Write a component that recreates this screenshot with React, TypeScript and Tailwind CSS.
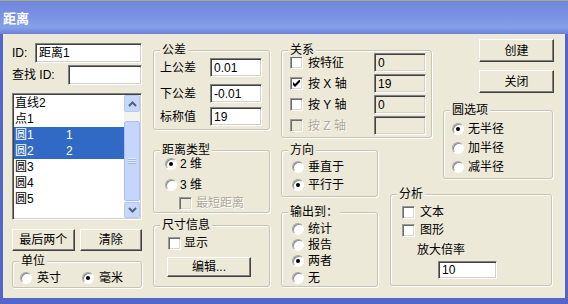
import React from "react";

const sunken =
  "border border-[#808080] border-r-white border-b-white shadow-[inset_1px_1px_0_#404040,inset_-1px_-1px_0_#D4D0C8]";
const sunkenSoft =
  "border border-[#9A9A9A] border-r-white border-b-white shadow-[inset_1px_1px_0_#6A6A6A,inset_-1px_-1px_0_#DCD9CC]";
const sunkenRound =
  "border border-[#A7A7A7] border-r-white border-b-white shadow-[inset_1px_1px_0_#8A8A8A]";

function Group({ title, className = "", children }: { title: string; className?: string; children?: React.ReactNode }) {
  return (
    <div className={`relative pt-[7px] ${className}`}>
      <div className="h-full rounded-[3px] border border-[#C7C4B4] shadow-[1px_1px_0_#fff,inset_1px_1px_0_#fff]">
        {children}
      </div>
      <span className="absolute left-[7px] top-0 bg-[#ECE9D8] px-[2px] leading-[14px]">{title}</span>
    </div>
  );
}

function Field({ children, className = "", disabled = false }: { children?: React.ReactNode; className?: string; disabled?: boolean }) {
  return (
    <div className={`flex items-center pl-[3px] leading-none ${sunken} ${disabled ? "bg-[#ECE9D8]" : "bg-white"} ${className}`}>
      {children}
    </div>
  );
}

function Btn({ children, className = "" }: { children: React.ReactNode; className?: string }) {
  return (
    <button className={`flex items-center justify-center bg-[#ECE9D8] border border-white border-r-[#404040] border-b-[#404040] shadow-[inset_-1px_-1px_0_#808080] ${className}`}>
      {children}
    </button>
  );
}

function Radio({ checked = false }: { checked?: boolean }) {
  return (
    <span className={`flex w-[12px] h-[12px] shrink-0 items-center justify-center rounded-full bg-white ${sunkenRound}`}>
      {checked && <span className="w-[4px] h-[4px] rounded-full bg-black" />}
    </span>
  );
}

function Check({ checked = false, disabled = false }: { checked?: boolean; disabled?: boolean }) {
  return (
    <span className={`flex w-[13px] h-[13px] shrink-0 items-center justify-center ${sunkenSoft} ${disabled ? "bg-[#ECE9D8]" : "bg-white"}`}>
      {checked && (
        <svg width="7" height="7" viewBox="0 0 7 7">
          <path d="M0 2 L2 4 L7 -1 L7 2 L2 7 L0 5 Z" fill="#000" />
        </svg>
      )}
    </span>
  );
}

const dim = "text-[#ACA899] [text-shadow:1px_1px_0_#fff]";

function Chevron({ up }: { up?: boolean }) {
  return (
    <svg width="9" height="6" viewBox="0 0 9 6">
      <path d={up ? "M1 5 L4.5 1.5 L8 5" : "M1 1 L4.5 4.5 L8 1"} fill="none" stroke="#4D6185" strokeWidth="2" />
    </svg>
  );
}

function ListBox() {
  const rows: [string, string, boolean][] = [
    ["直线2", "", false],
    ["点1", "", false],
    ["圆1", "1", true],
    ["圆2", "2", true],
    ["圆3", "", false],
    ["圆4", "", false],
    ["圆5", "", false],
  ];
  return (
    <div className={`mt-[8px] h-[127px] flex p-px bg-white ${sunken}`}>
      <div className="flex-1 flex flex-col">
        {rows.map(([a, b, sel]) => (
          <div key={a} className={`h-[16px] flex items-center pl-[1px] ${sel ? "bg-[#316AC5] text-white" : ""}`}>
            <span className="w-[51px]">{a}</span>
            <span>{b}</span>
          </div>
        ))}
      </div>
      <div className="w-[16px] flex flex-col bg-[#F4F3EE]">
        <div className="h-[17px] flex items-center justify-center rounded-[2px] border border-[#B5C7F3] bg-[#C7D6FB]">
          <Chevron up />
        </div>
        <div className="h-[9px]" />
        <div className="h-[80px] flex items-center justify-center rounded-[2px] border border-[#AABEF0] bg-[#C5D5FC]">
          <svg width="8" height="8" viewBox="0 0 8 8">
            <path d="M0 1.5 H8 M0 3.5 H8 M0 5.5 H8" stroke="#E4ECFE" strokeWidth="1" />
            <path d="M0 2.5 H8 M0 4.5 H8 M0 6.5 H8" stroke="#9FB5EE" strokeWidth="1" />
          </svg>
        </div>
        <div className="flex-1" />
        <div className="h-[16px] flex items-center justify-center rounded-[2px] border border-[#B5C7F3] bg-[#C7D6FB]">
          <Chevron />
        </div>
      </div>
    </div>
  );
}

export default function App() {
  return (
    <div className="w-[568px] h-[304px] flex flex-col overflow-hidden bg-[#5366CC] font-['Liberation_Sans','Noto_Sans_CJK_SC',sans-serif] text-[12px] leading-[16px] text-black">
      <div className="h-[34px] shrink-0 flex items-center pl-[3px] pt-[2px] border-t border-[#A8A890] bg-[linear-gradient(180deg,#7086DB_0%,#7A92E2_45%,#86A0E8_80%,#6C82D6_100%)]">
        <span className="text-[13px] font-bold text-white leading-none">距离</span>
      </div>

      <div className="flex-1 mx-[3px] mb-[6px] flex pl-[9px] bg-[#ECE9D8]">
        {/* left column */}
        <div className="w-[130px] flex flex-col">
          <div className="mt-[9px] h-[20px] flex items-center">
            <span className="w-[23px]">ID:</span>
            <Field className="flex-1 h-full">距离1</Field>
          </div>
          <div className="mt-[2px] h-[20px] flex items-center">
            <span className="w-[56px]">查找 ID:</span>
            <Field className="flex-1 h-full" />
          </div>
          <ListBox />
          <div className="mt-[9px] h-[22px] flex gap-[5px]">
            <Btn className="flex-1">最后两个</Btn>
            <Btn className="flex-1">清除</Btn>
          </div>
          <Group title="单位" className="mt-[3px] h-[34px]">
            <div className="mt-[8px] h-[16px] flex items-center pl-[7px]">
              <div className="w-[62px] flex items-center gap-[5px]">
                <Radio />
                英寸
              </div>
              <div className="flex items-center gap-[5px]">
                <Radio checked />
                毫米
              </div>
            </div>
          </Group>
        </div>

        {/* middle column */}
        <div className="ml-[11px] w-[117px] flex flex-col">
          <Group title="公差" className="mt-[9px] h-[87px]">
            <div className="mt-[7px] h-[19px] flex items-center pl-[6px]">
              <span className="w-[50px]">上公差</span>
              <Field className="w-[52px] h-full">0.01</Field>
            </div>
            <div className="mt-[7px] h-[19px] flex items-center pl-[6px]">
              <span className="w-[50px]">下公差</span>
              <Field className="w-[52px] h-full">-0.01</Field>
            </div>
            <div className="mt-[4px] h-[19px] flex items-center pl-[6px]">
              <span className="w-[50px]">标称值</span>
              <Field className="w-[52px] h-full">19</Field>
            </div>
          </Group>
          <Group title="距离类型" className="mt-[13px] h-[70px]">
            <div className="mt-[5px] h-[16px] flex items-center gap-[3px] pl-[11px]">
              <Radio checked />2 维
            </div>
            <div className="mt-[5px] h-[16px] flex items-center gap-[3px] pl-[11px]">
              <Radio />3 维
            </div>
            <div className="mt-[2px] h-[16px] flex items-center gap-[4px] pl-[25px]">
              <Check disabled />
              <span className={dim}>最短距离</span>
            </div>
          </Group>
          <Group title="尺寸信息" className="mt-[5px] h-[69px]">
            <div className="mt-[9px] h-[16px] flex items-center gap-[3px] pl-[14px]">
              <Check />
              显示
            </div>
            <Btn className="mt-[6px] ml-[13px] w-[84px] h-[20px]">编辑...</Btn>
          </Group>
        </div>

        {/* right area */}
        <div className="ml-[11px] mt-[5px] grid grid-cols-[97px_12px_42px_11px_111px] grid-rows-[104px_44px_100px] items-start">
          <Group title="关系" className="col-start-1 col-span-3 row-start-1 mt-[4px] h-[95px]">
            {[
              ["按特征", "0", false, false],
              ["按 X 轴", "19", true, false],
              ["按 Y 轴", "0", false, false],
              ["按 Z 轴", "", false, true],
            ].map(([label, val, checked, disabled]) => (
              <div key={label as string} className="mt-[2px] h-[19px] flex items-center pl-[8px] pr-[5px]">
                <Check checked={checked as boolean} disabled={disabled as boolean} />
                <span className={`ml-[5px] ${disabled ? dim : ""}`}>{label as string}</span>
                <Field disabled className="ml-auto w-[52px] h-full">
                  {val as string}
                </Field>
              </div>
            ))}
          </Group>

          <div className="col-start-5 row-start-1 row-span-2 flex flex-col">
            <Btn className="ml-[36px] w-[75px] h-[23px]">创建</Btn>
            <Btn className="mt-[8px] ml-[36px] w-[75px] h-[23px]">关闭</Btn>
            <Group title="圆选项" className="mt-[10px] w-[110px] h-[76px]">
              <div className="mt-[10px] h-[16px] flex items-center gap-[4px] pl-[8px]">
                <Radio checked />
                无半径
              </div>
              <div className="mt-[3px] h-[16px] flex items-center gap-[4px] pl-[8px]">
                <Radio />
                加半径
              </div>
              <div className="mt-[3px] h-[16px] flex items-center gap-[4px] pl-[8px]">
                <Radio />
                减半径
              </div>
            </Group>
          </div>

          <div className="col-start-1 row-start-2 row-span-2 flex flex-col">
            <Group title="方向" className="h-[54px]">
              <div className="mt-[8px] h-[16px] flex items-center gap-[4px] pl-[10px]">
                <Radio />
                垂直于
              </div>
              <div className="mt-[2px] h-[16px] flex items-center gap-[4px] pl-[10px]">
                <Radio checked />
                平行于
              </div>
            </Group>
            <Group title="输出到：" className="mt-[8px] h-[82px]">
              <div className="mt-[8px] h-[16px] flex items-center gap-[4px] pl-[10px]">
                <Radio />
                统计
              </div>
              <div className="h-[16px] flex items-center gap-[4px] pl-[10px]">
                <Radio />
                报告
              </div>
              <div className="h-[16px] flex items-center gap-[4px] pl-[10px]">
                <Radio checked />
                两者
              </div>
              <div className="mt-[1px] h-[16px] flex items-center gap-[4px] pl-[10px]">
                <Radio />
                无
              </div>
            </Group>
          </div>

          <Group title="分析" className="col-start-3 col-span-3 row-start-3 w-[162px] h-[99px]">
            <div className="mt-[9px] h-[16px] flex items-center gap-[5px] pl-[11px]">
              <Check />
              文本
            </div>
            <div className="mt-[2px] h-[16px] flex items-center gap-[5px] pl-[11px]">
              <Check />
              图形
            </div>
            <div className="mt-[4px] h-[16px] flex items-center pl-[26px]">放大倍率</div>
            <Field className="mt-[3px] ml-[47px] w-[59px] h-[18px]">10</Field>
          </Group>
        </div>
      </div>
    </div>
  );
}
